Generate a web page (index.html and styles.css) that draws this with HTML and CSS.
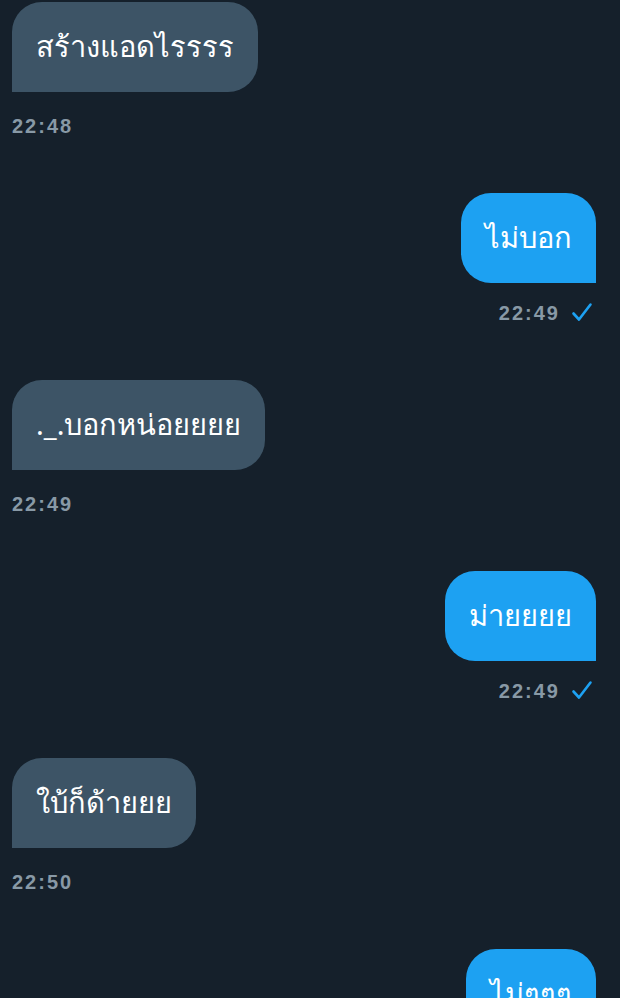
FILE: index.html
```html
<!DOCTYPE html>
<html lang="th">
<head>
  <meta charset="UTF-8">
  <meta name="viewport" content="width=device-width, initial-scale=1">
  <title>แชท</title>
  <link rel="stylesheet" href="styles.css">
</head>
<body>
  <div class="chat">
    <div class="msg in">
      <div class="bubble">สร้างแอดไรรรร</div>
      <div class="meta"><span class="time">22:48</span></div>
    </div>

    <div class="msg out">
      <div class="bubble">ไม่บอก</div>
      <div class="meta">
        <span class="time">22:49</span>
        <svg class="check" viewBox="0 0 24 24" width="24" height="24"><path d="M3.5 12.5l5.5 6L20.5 3.5" fill="none" stroke="#1da1f2" stroke-width="2.6" stroke-linecap="round" stroke-linejoin="round"/></svg>
      </div>
    </div>

    <div class="msg in">
      <div class="bubble">._.บอกหน่อยยยย</div>
      <div class="meta"><span class="time">22:49</span></div>
    </div>

    <div class="msg out">
      <div class="bubble">ม่ายยยย</div>
      <div class="meta">
        <span class="time">22:49</span>
        <svg class="check" viewBox="0 0 24 24" width="24" height="24"><path d="M3.5 12.5l5.5 6L20.5 3.5" fill="none" stroke="#1da1f2" stroke-width="2.6" stroke-linecap="round" stroke-linejoin="round"/></svg>
      </div>
    </div>

    <div class="msg in">
      <div class="bubble">ใบ้ก็ด้ายยย</div>
      <div class="meta"><span class="time">22:50</span></div>
    </div>

    <div class="msg out">
      <div class="bubble">ไม่ๆๆๆ</div>
    </div>
  </div>
</body>
</html>
```

FILE: styles.css
```css
html, body {
  margin: 0;
  padding: 0;
  background: #15202b;
}
body {
  font-family: "Noto Sans", "Liberation Sans", sans-serif;
  overflow: hidden;
  height: 998px;
}
.chat {
  display: flex;
  flex-direction: column;
  gap: 55px;
  padding: 2px 24px 0 12px;
}
.msg {
  display: flex;
  flex-direction: column;
}
.msg.in {
  align-items: flex-start;
}
.msg.out {
  align-items: flex-end;
}
.bubble {
  height: 90px;
  box-sizing: border-box;
  padding: 0 24px;
  display: flex;
  align-items: center;
  font-size: 29px;
  color: #fff;
  white-space: nowrap;
  border-radius: 30px;
}
.in .bubble {
  background: #3d5466;
  border-bottom-left-radius: 0;
}
.out .bubble {
  background: #1da1f2;
  border-bottom-right-radius: 0;
}
.meta {
  display: flex;
  align-items: center;
  gap: 10px;
  height: 24px;
}
.in .meta {
  margin-top: 22px;
}
.out .meta {
  margin-top: 18px;
  margin-right: 2px;
}
.time {
  font-family: "Liberation Sans", sans-serif;
  font-weight: bold;
  font-size: 20px;
  color: #8899a6;
  letter-spacing: 2px;
}
.check {
  display: block;
}
```
